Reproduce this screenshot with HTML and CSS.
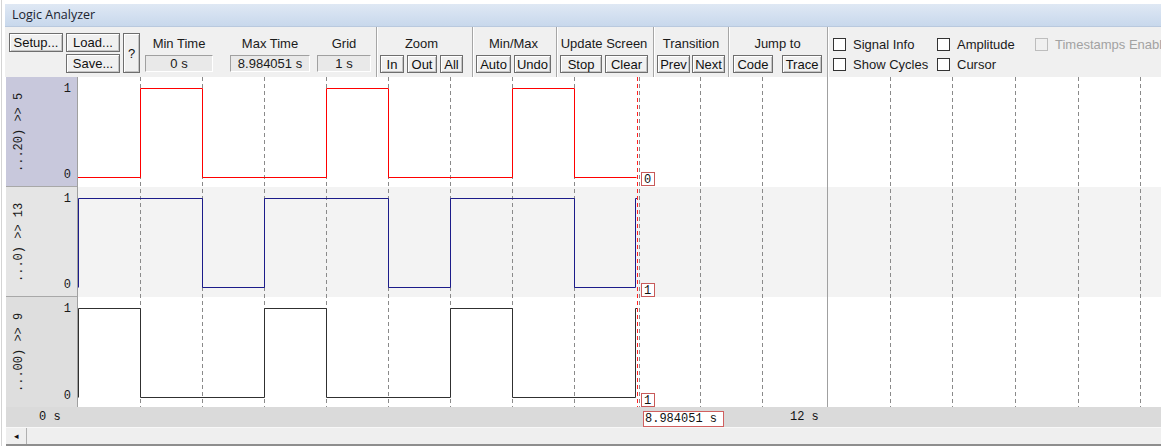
FILE: index.html
```html
<html>
	<head>
	<link rel="stylesheet" href="styles.css">
	</head>
	<body>
		<div class="frame">
			<div class="titlebar">Logic Analyzer</div>

			<div class="toolbar">
				<div class="files">
					<button class="btn">Setup...</button>
					<button class="btn">Load...</button>
					<button class="btn help">?</button>
					<button class="btn save">Save...</button>
				</div>
				<div class="field f-min">
					<div class="flabel">Min Time</div>
					<div class="fbox">0 s</div>
				</div>
				<div class="field f-max">
					<div class="flabel">Max Time</div>
					<div class="fbox">8.984051 s</div>
				</div>
				<div class="field f-grid">
					<div class="flabel">Grid</div>
					<div class="fbox">1 s</div>
				</div>

				<div class="group g-zoom">
					<div class="glabel">Zoom</div>
					<div class="gbtns">
						<button class="btn w24">In</button>
						<button class="btn w30">Out</button>
						<button class="btn w23">All</button>
					</div>
				</div>
				<div class="group g-minmax">
					<div class="glabel">Min/Max</div>
					<div class="gbtns">
						<button class="btn w35">Auto</button>
						<button class="btn w37">Undo</button>
					</div>
				</div>
				<div class="group g-update">
					<div class="glabel">Update Screen</div>
					<div class="gbtns">
						<button class="btn w42">Stop</button>
						<button class="btn w43">Clear</button>
					</div>
				</div>
				<div class="group g-trans">
					<div class="glabel">Transition</div>
					<div class="gbtns">
						<button class="btn w33">Prev</button>
						<button class="btn w33">Next</button>
					</div>
				</div>
				<div class="group g-jump">
					<div class="glabel">Jump to</div>
					<div class="gbtns">
						<button class="btn w40">Code</button>
						<button class="btn w40">Trace</button>
					</div>
				</div>

				<div class="checks">
					<label class="chk c1"><span class="box"></span>Signal Info</label>
					<label class="chk c2"><span class="box"></span>Amplitude</label>
					<label class="chk c3 disabled"><span class="box"></span>Timestamps Enable</label>
					<label class="chk c1"><span class="box"></span>Show Cycles</label>
					<label class="chk c2"><span class="box"></span>Cursor</label>
				</div>
			</div>

			<div class="wave">
				<div class="names">
					<div class="name sel">
						<div class="signame">...20) &gt;&gt; 5</div>
						<div class="levels"><span>1</span><span>0</span></div>
					</div>
					<div class="name">
						<div class="signame">...0) &gt;&gt; 13</div>
						<div class="levels"><span>1</span><span>0</span></div>
					</div>
					<div class="name last">
						<div class="signame">...00) &gt;&gt; 9</div>
						<div class="levels"><span>1</span><span>0</span></div>
					</div>
				</div>

				<svg class="plot" width="1083" height="330" viewBox="0 0 1083 330">
					<rect x="0" y="0" width="1083" height="330" fill="#ffffff"/>
					<rect x="0" y="110" width="1083" height="110" fill="#f3f3f3"/>

					<g class="grid" stroke="#8a8a8a" stroke-width="1" stroke-dasharray="4 3">
						<line x1="62.5" y1="0" x2="62.5" y2="330"/>
						<line x1="124.5" y1="0" x2="124.5" y2="330"/>
						<line x1="186.5" y1="0" x2="186.5" y2="330"/>
						<line x1="248.5" y1="0" x2="248.5" y2="330"/>
						<line x1="310.5" y1="0" x2="310.5" y2="330"/>
						<line x1="372.5" y1="0" x2="372.5" y2="330"/>
						<line x1="434.5" y1="0" x2="434.5" y2="330"/>
						<line x1="496.5" y1="0" x2="496.5" y2="330"/>
						<line x1="561.5" y1="0" x2="561.5" y2="330"/>
						<line x1="622.5" y1="0" x2="622.5" y2="330"/>
						<line x1="684.5" y1="0" x2="684.5" y2="330"/>
						<line x1="812.5" y1="0" x2="812.5" y2="330"/>
						<line x1="874.5" y1="0" x2="874.5" y2="330"/>
						<line x1="937.5" y1="0" x2="937.5" y2="330"/>
						<line x1="1000.5" y1="0" x2="1000.5" y2="330"/>
						<line x1="1062.5" y1="0" x2="1062.5" y2="330"/>
					</g>
					<line x1="749.5" y1="0" x2="749.5" y2="330" stroke="#a0a0a0" stroke-width="1"/>

					<!-- signals -->
					<path d="M0 100.5 H62.5 V11.5 H124.5 V100.5 H248.5 V11.5 H310.5 V100.5 H434.5 V11.5 H496.5 V100.5 H558.5" fill="none" stroke="#ff0000" stroke-width="1"/>
					<g transform="translate(0,110)">
						<path d="M0.5 100.5 V11.5 H124.5 V100.5 H186.5 V11.5 H310.5 V100.5 H372.5 V11.5 H496.5 V100.5 H557.5 V11.5 H559.5" fill="none" stroke="#1c1c8a" stroke-width="1"/>
					</g>
					<g transform="translate(0,220)">
						<path d="M0.5 100.5 V11.5 H62.5 V100.5 H186.5 V11.5 H248.5 V100.5 H372.5 V11.5 H434.5 V100.5 H557.5 V11.5 H559.5" fill="none" stroke="#303030" stroke-width="1"/>
					</g>

					<!-- cursor -->
					<line x1="559.5" y1="0" x2="559.5" y2="330" stroke="#ff2020" stroke-width="1" stroke-dasharray="4 3"/>
					<g class="vals">
						<rect x="563.5" y="95.5" width="13" height="13" fill="#fff" stroke="#c85a5a"/>
						<text x="566" y="106">0</text>
						<rect x="563.5" y="206.5" width="13" height="13" fill="#fff" stroke="#c85a5a"/>
						<text x="566" y="217">1</text>
						<rect x="563.5" y="316.5" width="13" height="13" fill="#fff" stroke="#c85a5a"/>
						<text x="566" y="327">1</text>
					</g>
				</svg>
			</div>

			<div class="axis">
				<span class="tick t0">0 s</span>
				<span class="tick cur">8.984051 s</span>
				<span class="tick t12">12 s</span>
			</div>

			<div class="hscroll">
				<div class="arrow">&#9666;</div>
			</div>
		</div>
	</body>
</html>
```

FILE: styles.css
```css
*{
	margin:0px;
	padding:0px;
	box-sizing: border-box;
}
body{
	background: #ffffff;
	font-family: "Liberation Sans", Arial, sans-serif;
	font-size: 13px;
	color: #1a1a1a;
	overflow: hidden;
}
.frame{
	margin-left: 1px;
	border-left: 1px solid #d4d4d4;
	padding: 4px 0px 0px 3px;
	width: 1160px;
}
.titlebar{
	height: 23px;
	line-height: 22px;
	padding-left: 7px;
	font-family: "Open Sans", sans-serif;
	font-size: 12.5px;
	color: #1b2430;
	background: linear-gradient(#dfe8f4, #c8d8ec);
	border-bottom: 1px solid #b9c9de;
}

/* toolbar */
.toolbar{
	display: flex;
	height: 50px;
	padding-left: 4px;
	background: #f0f0f0;
	overflow: hidden;
	white-space: nowrap;
}
.toolbar > div{
	flex: none;
}
.btn{
	font-family: "Liberation Sans", Arial, sans-serif;
	font-size: 13px;
	color: #111;
	background: #f0f0f0;
	border: 1px solid #6e6e6e;
	box-shadow: inset 1px 1px 0px #ffffff, inset -1px -1px 0px #c4c4c4;
	height: 18px;
	line-height: 15px;
	padding: 0px 1px;
	text-align: center;
}
.files{
	display: grid;
	grid-template-columns: 54px 54px 17px;
	grid-template-rows: 19px 19px;
	column-gap: 3px;
	row-gap: 2px;
	padding-top: 6px;
}
.files .btn{
	height: 19px;
}
.files .help{
	grid-row: 1 / 3;
	grid-column: 3;
	height: 40px;
	padding: 0px;
}
.files .save{
	grid-column: 2;
}
.field{
	display: flex;
	flex-direction: column;
	padding-top: 6px;
}
.flabel{
	height: 22px;
	line-height: 22px;
	text-align: center;
}
.fbox{
	height: 17px;
	line-height: 15px;
	text-align: center;
	background: #e9e9e9;
	border: 1px solid;
	border-color: #a0a0a0 #ffffff #ffffff #a0a0a0;
}
.f-min{ margin-left: 5px; width: 68px; }
.f-max{ margin-left: 17px; width: 80px; }
.f-grid{ margin-left: 7px; width: 54px; }

.group{
	display: flex;
	flex-direction: column;
	padding-top: 6px;
	border-left: 1px solid #a6a6a6;
	box-shadow: inset 1px 0px 0px #ffffff;
}
.glabel{
	height: 22px;
	line-height: 22px;
	text-align: center;
}
.gbtns{
	display: flex;
	gap: 3px;
}
.g-zoom{ margin-left: 5px; padding-left: 3px; padding-right: 9px; }
.g-minmax{ padding-left: 3px; padding-right: 5px; }
.g-update{ padding-left: 3px; padding-right: 5px; }
.g-trans{ padding-left: 3px; padding-right: 3px; }
.g-trans .gbtns{ gap: 2px; }
.g-jump{ padding-left: 4px; padding-right: 5px; }
.g-jump .gbtns{ gap: 9px; }

.w23{ width: 23px; }
.w24{ width: 24px; }
.w30{ width: 30px; }
.w33{ width: 33px; }
.w35{ width: 35px; }
.w37{ width: 37px; }
.w40{ width: 40px; }
.w42{ width: 42px; }
.w43{ width: 43px; }

.checks{
	display: grid;
	grid-template-columns: 104px 98px 200px;
	grid-template-rows: 20px 20px;
	padding: 7px 0px 0px 5px;
	border-left: 1px solid #a6a6a6;
	box-shadow: inset 1px 0px 0px #ffffff;
}
.chk{
	display: flex;
	align-items: center;
	gap: 7px;
}
.chk .box{
	width: 13px;
	height: 13px;
	background: #ffffff;
	border: 1px solid #333333;
}
.chk.disabled{
	color: #a2a2a2;
}
.chk.disabled .box{
	background: #f0f0f0;
	border-color: #bdbdbd;
}

/* waveform area */
.wave{
	display: flex;
	height: 330px;
}
.names{
	flex: none;
	margin-left: 1px;
	width: 72px;
	display: flex;
	flex-direction: column;
	border-right: 1px solid #a0a0a0;
	font-family: "Liberation Mono", monospace;
	font-size: 12px;
	color: #1a1a1a;
}
.name{
	height: 110px;
	display: flex;
	justify-content: space-between;
	background: #e5e5e5;
	border-bottom: 1px solid #a8a8a8;
	padding: 5px 6px 4px 6px;
}
.name.sel{
	background: #c8c8dc;
}
.name.last{
	background: #dedede;
	border-bottom: none;
}
.signame{
	writing-mode: vertical-rl;
	transform: rotate(180deg);
	text-align: center;
	width: 14px;
}
.levels{
	display: flex;
	flex-direction: column;
	justify-content: space-between;
	line-height: 14px;
}
.plot{
	display: block;
	flex: none;
}
.vals text{
	font-family: "Liberation Mono", monospace;
	font-size: 12px;
	fill: #111;
}

/* time axis */
.axis{
	position: relative;
	margin-left: 1px;
	height: 20px;
	background: #dadada;
	font-family: "Liberation Mono", monospace;
	font-size: 12px;
	color: #111;
}
.tick{
	position: absolute;
	top: 3px;
	line-height: 14px;
}
.t0{ left: 33px; }
.t12{ left: 784px; }
.cur{
	left: 637px;
	top: 4px;
	height: 16px;
	padding: 0px 2px 0px 1px;
	background: #ffffff;
	border: 1px solid #d06060;
	width: 81px;
}

.hscroll{
	margin-left: 1px;
	height: 19px;
	background: #efefef;
	border-top: 1px solid #f8f8f8;
	border-bottom: 2px solid #8e8e8e;
}
.arrow{
	width: 21px;
	height: 16px;
	line-height: 16px;
	font-size: 9px;
	text-align: center;
	color: #111;
	border-right: 1px solid #b0b0b0;
}
```
